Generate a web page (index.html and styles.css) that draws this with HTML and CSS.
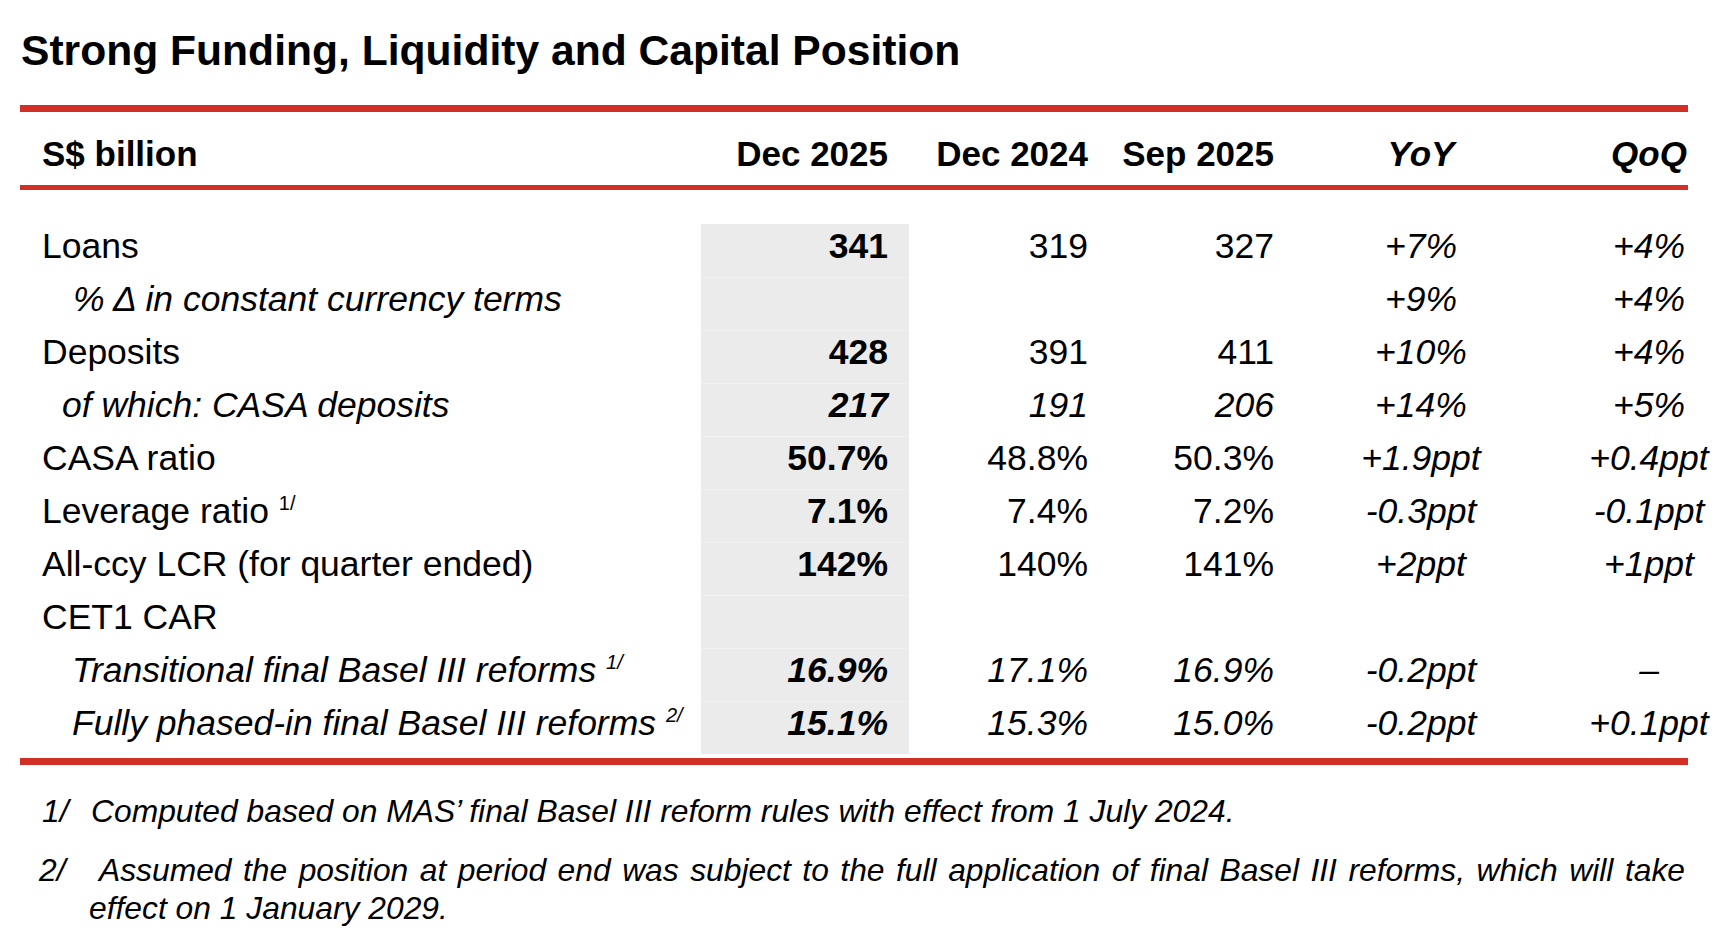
FILE: index.html
```html
<!DOCTYPE html>
<html lang="en">
<head>
<meta charset="utf-8">
<title>Strong Funding, Liquidity and Capital Position</title>
<link rel="stylesheet" href="styles.css">
</head>
<body>
<div class="page">
  <h1 class="title">Strong Funding, Liquidity and Capital Position</h1>
  <div class="rule rule-thick"></div>
  <div class="row head">
    <div class="label">S$ billion</div>
    <div class="num cur-head">Dec 2025</div>
    <div class="num">Dec 2024</div>
    <div class="num">Sep 2025</div>
    <div class="chg it">YoY</div>
    <div class="chg it">QoQ</div>
  </div>
  <div class="rule rule-thin"></div>
  <div class="body">
    <div class="row">
      <div class="label">Loans</div>
      <div class="num cur b">341</div>
      <div class="num">319</div>
      <div class="num">327</div>
      <div class="chg it">+7%</div>
      <div class="chg it">+4%</div>
    </div>
    <div class="row it">
      <div class="label ind-a">% &Delta; in constant currency terms</div>
      <div class="num cur b"></div>
      <div class="num"></div>
      <div class="num"></div>
      <div class="chg">+9%</div>
      <div class="chg">+4%</div>
    </div>
    <div class="row">
      <div class="label">Deposits</div>
      <div class="num cur b">428</div>
      <div class="num">391</div>
      <div class="num">411</div>
      <div class="chg it">+10%</div>
      <div class="chg it">+4%</div>
    </div>
    <div class="row it">
      <div class="label ind-b">of which: CASA deposits</div>
      <div class="num cur b">217</div>
      <div class="num">191</div>
      <div class="num">206</div>
      <div class="chg">+14%</div>
      <div class="chg">+5%</div>
    </div>
    <div class="row">
      <div class="label">CASA ratio</div>
      <div class="num cur b">50.7%</div>
      <div class="num">48.8%</div>
      <div class="num">50.3%</div>
      <div class="chg it">+1.9ppt</div>
      <div class="chg it">+0.4ppt</div>
    </div>
    <div class="row">
      <div class="label">Leverage ratio <sup class="sup">1/</sup></div>
      <div class="num cur b">7.1%</div>
      <div class="num">7.4%</div>
      <div class="num">7.2%</div>
      <div class="chg it">-0.3ppt</div>
      <div class="chg it">-0.1ppt</div>
    </div>
    <div class="row">
      <div class="label">All-ccy LCR (for quarter ended)</div>
      <div class="num cur b">142%</div>
      <div class="num">140%</div>
      <div class="num">141%</div>
      <div class="chg it">+2ppt</div>
      <div class="chg it">+1ppt</div>
    </div>
    <div class="row">
      <div class="label">CET1 CAR</div>
      <div class="num cur b"></div>
      <div class="num"></div>
      <div class="num"></div>
      <div class="chg it"></div>
      <div class="chg it"></div>
    </div>
    <div class="row it">
      <div class="label ind-c">Transitional final Basel III reforms <sup class="sup">1/</sup></div>
      <div class="num cur b">16.9%</div>
      <div class="num">17.1%</div>
      <div class="num">16.9%</div>
      <div class="chg">-0.2ppt</div>
      <div class="chg">&ndash;</div>
    </div>
    <div class="row it">
      <div class="label ind-c">Fully phased-in final Basel III reforms <sup class="sup">2/</sup></div>
      <div class="num cur b">15.1%</div>
      <div class="num">15.3%</div>
      <div class="num">15.0%</div>
      <div class="chg">-0.2ppt</div>
      <div class="chg">+0.1ppt</div>
    </div>
  </div>
  <div class="rule rule-bottom"></div>
  <div class="notes">
    <div class="note note-1">
      <span class="mark">1/</span>
      <span class="text">Computed based on MAS&rsquo; final Basel III reform rules with effect from 1 July 2024.</span>
    </div>
    <div class="note note-2">
      <span class="mark">2/</span>
      <span class="text">
        <span class="line line-just">Assumed the position at period end was subject to the full application of final Basel III reforms, which will take</span>
        <span class="line">effect on 1 January 2029.</span>
      </span>
    </div>
  </div>
</div>
</body>
</html>
```

FILE: styles.css
```css
html, body {
  margin: 0;
  padding: 0;
  background: #ffffff;
}

body {
  font-family: "Liberation Sans", Arial, Helvetica, sans-serif;
  color: #000000;
}

.page {
  width: 1736px;
  height: 952px;
  box-sizing: border-box;
  padding: 25px 0 0 20px;
  overflow: hidden;
}

.title {
  margin: 0 0 30px 1px;
  font-size: 42.6px;
  line-height: 50px;
  font-weight: 700;
  letter-spacing: 0;
}

.rule {
  width: 1668px;
  background: #d22f27;
}

.rule-thick {
  height: 7px;
}

.rule-thin {
  height: 5px;
}

.rule-bottom {
  height: 7px;
  margin-top: 4px;
}

.row {
  display: grid;
  grid-template-columns: 681px 208px 179px 186px 294px 162px;
  height: 53px;
  font-size: 35.5px;
  line-height: 45px;
  white-space: nowrap;
}

.row > div {
  padding-bottom: 8px;
}

.head {
  height: 73px;
  font-weight: 700;
  font-size: 35px;
}

.head > div {
  padding-top: 19px;
  padding-bottom: 9px;
}

.body {
  margin-top: 34px;
}

.label {
  padding-left: 22px;
}

.ind-a {
  padding-left: 53px;
}

.ind-b {
  padding-left: 42px;
}

.ind-c {
  padding-left: 52px;
}

.num {
  text-align: right;
}

.cur,
.cur-head {
  padding-right: 21px;
}

.cur {
  background: #ebebeb;
}

.body .row + .row .cur {
  box-shadow: inset 0 1px 0 #f1f1f1;
}

.chg {
  text-align: center;
}

.b {
  font-weight: 700;
}

.it {
  font-style: italic;
}

.sup {
  font-size: 20px;
  line-height: 0;
  vertical-align: 13px;
  font-style: normal;
}

.it .sup {
  font-style: italic;
}

.notes {
  margin-top: 27px;
  font-size: 31.8px;
  line-height: 38px;
  font-style: italic;
}

.note {
  display: flex;
  width: 1665px;
}

.mark {
  flex: 0 0 auto;
}

.note-1 .mark {
  width: 49px;
  padding-left: 22px;
}

.note-2 {
  margin-top: 21px;
}

.note-2 .mark {
  width: 50px;
  padding-left: 19px;
}

.text {
  flex: 1 1 auto;
  min-width: 0;
}

.line {
  display: block;
}

.line-just {
  text-align: justify;
  text-align-last: justify;
  padding-left: 10px;
}
```
